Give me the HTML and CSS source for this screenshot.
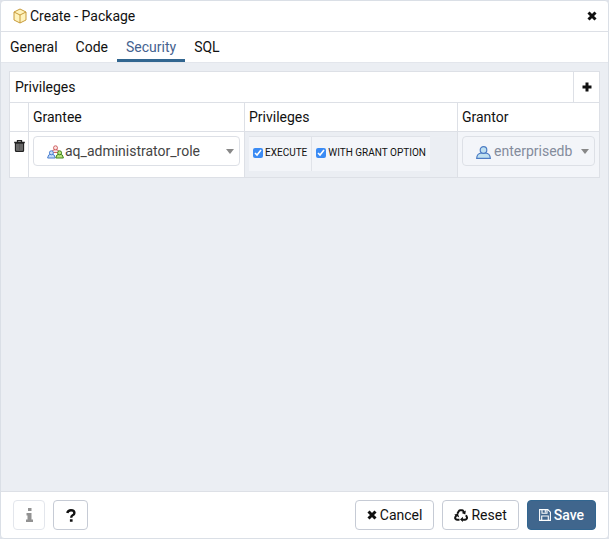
FILE: index.html
```html
<!DOCTYPE html>
<html lang="en">
<head>
<meta charset="utf-8">
<title>Create - Package</title>
<link rel="stylesheet" href="styles.css">
</head>
<body>
<main class="dialog">
  <header class="titlebar">
    <svg class="package-icon" viewBox="0 0 14 16" aria-hidden="true">
      <path d="M7 1 13 4v8l-6 3-6-3V4z" fill="#fff3bd"/>
      <path d="M7 1 13 4v8l-6 3-6-3V4zM1 4l6 3 6-3M7 7v8" fill="none" stroke="#c79a3b" stroke-linejoin="round"/>
    </svg>
    <h1 class="title">Create - Package</h1>
    <button class="icon-button" type="button" aria-label="Close">
      <svg class="cross" viewBox="0 0 10 10"><path d="M1.5 1.5l7 7M8.5 1.5l-7 7"/></svg>
    </button>
  </header>
  <nav class="tabs">
    <a class="tab" href="#general">General</a>
    <a class="tab" href="#code">Code</a>
    <a class="tab active" href="#security" aria-current="page">Security</a>
    <a class="tab" href="#sql">SQL</a>
  </nav>
  <section class="content" id="security">
    <div class="grid-head">
      <h2 class="grid-title">Privileges</h2>
      <button class="add" type="button" aria-label="Add row">
        <svg class="plus" viewBox="0 0 10 10"><path d="M5 .5v9M.5 5h9"/></svg>
      </button>
    </div>
    <table class="grid">
      <colgroup><col class="col-action"><col class="col-grantee"><col class="col-privileges"><col></colgroup>
      <thead>
        <tr><th></th><th>Grantee</th><th>Privileges</th><th>Grantor</th></tr>
      </thead>
      <tbody>
        <tr>
          <td class="cell-action">
            <button class="trash" type="button" aria-label="Delete row">
              <svg class="trash-icon" viewBox="0 0 11 12">
                <path d="M3.5 2V.7h4V2M.2 2.5h10.6" fill="none" stroke="#222" stroke-width="1.3"/>
                <path d="M1.5 3v7.5q0 .9.9.9h6.2q.9 0 .9-.9V3z" fill="#777" stroke="#222" stroke-width="1.3"/>
                <path d="M4 4v6M5.5 4v6M7 4v6" stroke="#444" stroke-width=".6"/>
              </svg>
            </button>
          </td>
          <td>
            <div class="picker">
              <svg class="picker-icon role-icon" viewBox="0 0 17 14" aria-hidden="true">
                <g fill="#fbe3e3" stroke="#cf6464"><path d="M4.8 7.5q.2-3 3.7-3t3.7 3z"/><circle cx="8.5" cy="2.8" r="2"/></g>
                <g fill="#c5dcf7" stroke="#4b7fd0"><path d="M.6 13q.2-4 3.8-4t3.8 4z"/><circle cx="4.4" cy="7.8" r="2"/></g>
                <g fill="#b9e67b" stroke="#43851f"><path d="M8.8 13q.2-4 3.8-4t3.8 4z"/><circle cx="12.6" cy="7.8" r="2"/></g>
              </svg>
              <select class="select" aria-label="Grantee"><option>aq_administrator_role</option></select>
            </div>
          </td>
          <td class="cell-privileges">
            <div class="checks">
              <label class="check"><input class="box" type="checkbox" checked>EXECUTE</label>
              <label class="check"><input class="box" type="checkbox" checked>WITH GRANT OPTION</label>
            </div>
          </td>
          <td class="cell-grantor">
            <div class="picker">
              <svg class="picker-icon user-icon" viewBox="0 0 15 13" aria-hidden="true">
                <g fill="#bfe0f0" stroke="#4c7cc4" stroke-width="1.2"><path d="M.7 12.3q.2-5 4.800-5.300h4q4.600.3 4.800 5.300z"/><circle cx="7.500" cy="4" r="3.300"/></g>
              </svg>
              <select class="select" aria-label="Grantor" disabled><option>enterprisedb</option></select>
            </div>
          </td>
        </tr>
      </tbody>
    </table>
  </section>
  <footer class="footer">
    <button class="button square" type="button" aria-label="Information" disabled>
      <svg class="info-icon" viewBox="0 0 7 14"><path d="M2 0h3.500v3H2zM.5 5h5v6.500H7V14H0v-2.500h1.500v-4H.5z"/></svg>
    </button>
    <button class="button square help" type="button" aria-label="Help">
      <svg class="help-icon" viewBox="0 0 10 13"><path d="M1.300 4Q2 1.300 5 1.300q3.400 0 3.400 2.600 0 1.500-1.800 2.400Q5.200 7 5.200 8.800" fill="none" stroke="#111" stroke-width="2.400"/><path d="M3.900 10.300h2.700v2.500H3.900z" fill="#111"/></svg>
    </button>
    <span class="spacer"></span>
    <button class="button" type="button"><svg class="cross" viewBox="0 0 10 10"><path d="M1.500 1.500l7 7M8.500 1.500l-7 7"/></svg>Cancel</button>
    <button class="button" type="button">
      <svg class="recycle-icon" viewBox="0 0 14 13">
        <path d="M3.300 4.800 4.900 2q.5-.8 1.400-.8h1.800q.7 0 1.100.7l.9 1.500M12 6.300l.8 1.600q.5 1-.1 1.900-.5.900-1.600.9H8.500M5.500 10.700H3q-1.100 0-1.600-.9-.5-.9 0-1.900l1-1.700" fill="none" stroke="#111" stroke-width="2"/>
        <path d="M11.800 1.500 11.300 5.500 7.700 4zM8.900 7.800v5.200L6 10.500zM.2 5.500 4 4.800 5.200 8.500z" fill="#111"/>
      </svg>Reset</button>
    <button class="button primary" type="button">
      <svg class="save-icon" viewBox="0 0 12 12"><path d="M.6.600h8.200l2.600 2.600v8.200H.6zM3 .6v3.600h5V.6M2.700 11.400V7h6.600v4.400M6.300 1v2.500" fill="none" stroke="#fff" stroke-width="1.100"/></svg>Save</button>
  </footer>
</main>
</body>
</html>
```
FILE: styles.css
```css
* { box-sizing: border-box; }

body {
  margin: 0;
  background: #dfe3ea;
  color: #111;
  font: 14px/20px Roboto, "Liberation Sans", sans-serif;
}

svg { display: block; flex: none; }
button { font: inherit; color: inherit; cursor: pointer; }

.dialog {
  display: flex;
  flex-direction: column;
  min-height: 100vh;
  border: 1px solid #dadfe6;
  border-radius: 4px;
  background: #fff;
  overflow: hidden;
}

.titlebar {
  display: flex;
  align-items: center;
  height: 31px;
  padding: 0 11px 0 12px;
  border-bottom: 1px solid #dde0e6;
}
.package-icon { width: 14px; height: 16px; margin-right: 3px; }
.title, .grid-title { margin: 0; font-size: 14px; font-weight: 400; }
.title { flex: 1; }
.icon-button, .add, .trash {
  display: flex;
  align-items: center;
  justify-content: center;
  padding: 0;
  border: 0;
  background: none;
}
.cross { width: 10px; height: 10px; }
.cross path, .plus path { fill: none; stroke: #111; stroke-width: 3; }
.plus { width: 10px; height: 10px; }

.tabs { display: flex; height: 30px; }
.tab {
  padding: 5px 9px 2px;
  border-bottom: 3px solid transparent;
  color: #111;
  line-height: 20px;
  text-decoration: none;
}
.tab.active { color: #44628f; border-color: #326690; }

.content {
  flex: 1;
  padding: 8px;
  border-top: 1px solid #e3e6ec;
  background: #ebeef3;
}
.grid-head {
  display: flex;
  height: 31px;
  border: 1px solid #dde0e6;
  border-bottom: 0;
  background: #fff;
}
.grid-title { flex: 1; padding: 5px; }
.add { width: 26px; border-left: 1px solid #dde0e6; }

.grid { width: 100%; table-layout: fixed; border-collapse: collapse; background: #fff; }
.col-action { width: 19px; }
.col-grantee { width: 216px; }
.col-privileges { width: 213px; }
.grid th, .grid td { border: 1px solid #dde0e6; padding: 0 4px; text-align: left; }
.grid th { height: 29px; font-weight: 400; }
.grid td { height: 46px; padding: 4px; vertical-align: top; }
.grid .cell-action { padding: 8px 0 0; }
.grid .cell-privileges { background: #ebeef3; }
.grid .cell-grantor { background: #f3f5f9; }
.trash { width: 100%; }
.trash-icon { width: 11px; height: 12px; }

.picker { position: relative; }
.picker-icon { position: absolute; left: 14px; bottom: 7px; pointer-events: none; }
.role-icon { width: 17px; height: 14px; }
.user-icon { width: 15px; height: 13px; }
.select {
  display: block;
  width: 100%;
  height: 30px;
  padding: 0 20px 1px 31px;
  border: 1px solid #dde0e6;
  border-radius: 4px;
  background: none;
  color: #444;
  font: inherit;
  appearance: none;
}
.select:disabled { color: #848c9c; opacity: 1; }
.picker::after {
  content: "";
  position: absolute;
  top: 13px;
  right: 6px;
  border: 4px solid transparent;
  border-top: 5px solid #888;
  border-bottom: 0;
  pointer-events: none;
}

.checks { display: flex; }
.check {
  display: flex;
  align-items: center;
  height: 35px;
  padding: 0 4px 2px;
  border-top: 1px solid #e0e3e9;
  background: #f3f5f9;
  font-size: 10px;
  white-space: nowrap;
}
.check + .check { border-left: 1px solid #e0e3e9; }
.box { width: 10px; height: 10px; margin: 0 2px 0 0; accent-color: #3b8bf4; }

.footer {
  display: flex;
  align-items: center;
  gap: 8px;
  height: 47px;
  padding: 0 12px;
  border-top: 1px solid #dde0e6;
}
.spacer { flex: 1; }
.button {
  display: flex;
  align-items: center;
  justify-content: center;
  gap: 3px;
  height: 30px;
  padding: 0 11px;
  border: 1px solid #c6cbd5;
  border-radius: 4px;
  background: #fff;
}
.square { width: 32px; padding: 0; }
.square:disabled { border-color: #e3e6ec; }
.help { width: 35px; }
.info-icon { width: 7px; height: 14px; fill: #929292; }
.help-icon { width: 10px; height: 13px; }
.recycle-icon { width: 14px; height: 13px; }
.save-icon { width: 12px; height: 12px; }
.primary { border-color: #326690; background: #40668d; color: #fff; font-weight: 500; }
```
